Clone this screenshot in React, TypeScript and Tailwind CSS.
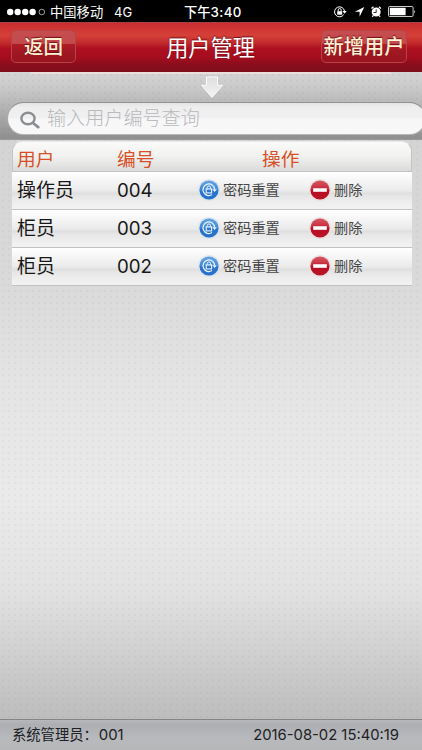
import type { ReactNode } from 'react';

const users = [
  { role: '操作员', id: '004' },
  { role: '柜员', id: '003' },
  { role: '柜员', id: '002' },
];

function StatusBar() {
  return (
    <div className="flex h-[22px] shrink-0 items-center bg-black pt-px pl-[7px] text-[13.3px] leading-[22px] whitespace-nowrap text-white">
      <svg className="h-2 w-[40px] shrink-0" viewBox="0 0 40 8" fill="#fff">
        <circle cx="3.2" cy="4" r="3.2" />
        <circle cx="10.7" cy="4" r="3.2" />
        <circle cx="18.2" cy="4" r="3.2" />
        <circle cx="25.6" cy="4" r="3.2" />
        <circle cx="34.8" cy="4" r="2.8" fill="none" stroke="#ddd" strokeWidth="0.7" />
      </svg>
      <span className="ml-[3px] w-[64px]">中国移动</span>
      <span className="w-[70px] text-[13px]">4G</span>
      <span className="w-[149px] font-medium"><span>下午</span><span className="tracking-[0.35px]">3:40</span></span>
      <svg className="h-[14px] w-[85px] shrink-0" viewBox="0 0 85 14" fill="none" stroke="#fff">
        <path d="M10.7 9.6A5 5 0 1 1 11.5 6.2" strokeWidth="1" />
        <path d="M9.5 6.1h4.2l-2.1 2.6z" fill="#fff" stroke="none" />
        <rect x="4.2" y="6.2" width="5" height="3.5" fill="#fff" stroke="none" />
        <path d="M5.2 6.3V5a1.5 1.5 0 0 1 3 0v1.3" strokeWidth="0.9" />
        <path d="M31.3 2 21.8 6.7h4.8v5z" fill="#fff" stroke="none" />
        <circle cx="43.2" cy="7" r="4.5" fill="#fff" stroke="none" />
        <path d="M38.5 3.6l2-1.8M47.9 3.6l-2-1.8M40.2 10.6l-1 1.1M46.2 10.6l1 1.1" strokeWidth="1.3" />
        <path d="M43.2 4.3v3.2h-2.7" stroke="#000" strokeWidth="0.8" />
        <rect x="55.5" y="1.5" width="24.6" height="10" rx="1.2" strokeWidth="0.8" />
        <rect x="56.8" y="2.8" width="15.8" height="7.4" fill="#fff" stroke="none" />
        <path d="M81.3 4.9q1.8 1.6 0 3.5z" fill="#fff" stroke="none" />
      </svg>
    </div>
  );
}

function NavButton({ wide = false, children }: { wide?: boolean; children: ReactNode }) {
  return (
    <button
      className={`${wide ? 'w-[86px] text-[20.3px]' : 'w-[65px] text-[19.5px]'} flex h-[33px] shrink-0 items-center justify-center rounded-[5px] border border-[#b94249] bg-[linear-gradient(180deg,#c54d50_0%,#c34a4d_40%,#ae1c27_43%,#9f1722_70%,#98141f_100%)] font-medium whitespace-nowrap text-[#fff1d3] [text-shadow:0_-1px_1px_#70101a]`}
    >
      <span className="translate-y-[1px]">{children}</span>
    </button>
  );
}

function ResetIcon() {
  return (
    <svg className="h-[22px] w-[22px] shrink-0" viewBox="0 0 22 22" fill="none">
      <defs>
        <linearGradient id="resetFill" x1="0" y1="0" x2="0" y2="1">
          <stop stopColor="#65a4e2" />
          <stop offset="0.5" stopColor="#4088d8" />
          <stop offset="0.55" stopColor="#2b74cc" />
          <stop offset="1" stopColor="#2470ca" />
        </linearGradient>
      </defs>
      <circle cx="11" cy="11" r="10.8" fill="#d7e3ed" />
      <circle cx="11" cy="11" r="9.6" fill="url(#resetFill)" />
      <path d="M14 15.6A5.8 5.8 0 1 1 16.6 10.3" stroke="#e9f4ff" strokeWidth="1.2" />
      <path d="M14.4 10.2h4.4l-2.2 2.7z" fill="#e9f4ff" />
      <rect x="8.2" y="9.9" width="5.4" height="4" stroke="#e9f4ff" strokeWidth="1.1" />
      <path d="M9.3 9.8V8.5a1.6 1.6 0 0 1 3.2 0V9.8" stroke="#e9f4ff" strokeWidth="1" />
    </svg>
  );
}

function DeleteIcon() {
  return (
    <svg className="h-[22px] w-[22px] shrink-0" viewBox="0 0 22 22">
      <defs>
        <linearGradient id="deleteFill" x1="0" y1="0" x2="0" y2="1">
          <stop stopColor="#d65562" />
          <stop offset="0.48" stopColor="#c62b3c" />
          <stop offset="0.53" stopColor="#b90d22" />
          <stop offset="1" stopColor="#b91528" />
        </linearGradient>
      </defs>
      <circle cx="11" cy="11" r="10.8" fill="#e9dddd" />
      <circle cx="11" cy="11" r="9.6" fill="url(#deleteFill)" />
      <rect x="4" y="9" width="14" height="4" fill="#fff" stroke="#ae1427" strokeWidth="0.4" />
    </svg>
  );
}

export default function App() {
  return (
    <main className="flex h-[750px] w-[422px] flex-col overflow-hidden bg-[radial-gradient(circle,#77777714_0.6px,transparent_1.2px),linear-gradient(180deg,#d4d4d4_0px,#d4d4d4_139px,#dadada_290px,#e4e4e4_380px,#eaeaea_500px,#e2e2e2_590px,#d4d4d4_640px,#bdbdbd_718px)] bg-[size:6px_6px,100%_100%] font-['Inter','Noto_Sans_CJK_SC',sans-serif]">
      <StatusBar />
      <header className="flex h-[50px] shrink-0 items-center justify-between border-t border-[#a93f3e] bg-[linear-gradient(180deg,#c92d30_0%,#d54038_25%,#c32b2d_40%,#ae1020_52%,#a50d1e_70%,#860e1c_88%,#800e1b_100%)] pr-[15px] pb-[2px] pl-[11px]">
        <NavButton>返回</NavButton>
        <h1 className="ml-[24px] translate-y-[1px] text-[22.2px] font-normal whitespace-nowrap text-white [text-shadow:0_-1px_1px_#701019]">用户管理</h1>
        <NavButton wide>新增用户</NavButton>
      </header>

      <section className="flex h-[68px] shrink-0 flex-col border-b border-[#999] bg-[radial-gradient(circle,#66666610_0.7px,transparent_1.1px),linear-gradient(180deg,#d5d5d5_0%,#c8c8c8_25%,#b2b2b2_55%,#929292_95%,#8f8f8f_100%)] bg-[size:6px_6px,100%_100%]">
        <div className="mx-[30px] h-[2px] w-[361px] shrink-0 bg-[#eadfdc]" />
        <div className="flex h-[28px] shrink-0 justify-center pl-[2px]">
          <svg className="mt-[2px] h-[23px] w-[24px]" viewBox="0 0 24 23">
            <defs>
              <linearGradient id="arrowFill" x1="0" y1="0" x2="0" y2="1">
                <stop stopColor="#dedede" />
                <stop offset="1" stopColor="#f4f4f4" />
              </linearGradient>
            </defs>
            <path d="M6.5 1h11v8.3h5L12 21.5 1.5 9.3h5z" fill="url(#arrowFill)" stroke="#fafafa" />
          </svg>
        </div>
        <label className="ml-[7px] flex h-[33px] w-[419px] shrink-0 items-center rounded-full border border-t-[#929292] border-r-[#aaa] border-b-[#b8b8b8] border-l-[#aaa] bg-[linear-gradient(180deg,#e4e4e4_0%,#eee_14%,#f0f0f0_48%,#f7f7f7_52%,#f8f8f8_100%)] pl-[12px]">
          <svg className="mt-[3px] h-[18px] w-[21px] shrink-0" viewBox="0 0 21 18" fill="none" stroke="#8b8e92">
            <ellipse cx="8" cy="7.5" rx="6.6" ry="5.8" strokeWidth="2.4" />
            <path d="m13 12 5.2 4.1" strokeWidth="2.8" strokeLinecap="round" />
          </svg>
          <span className="ml-[6px] pb-px text-[19.1px] font-light text-[#b9b9be]">输入用户编号查询</span>
        </label>
      </section>

      <section className="mt-px ml-[12px] w-[400px]">
        <div className="grid h-[31px] grid-cols-[100px_145px_1fr] items-center rounded-t-[10px] border border-[#c4c4c4] border-t-[#e8e8e8] bg-[linear-gradient(180deg,#fafaf8_0%,#f1f1f0_50%,#dadada_100%)] pt-[7px] pl-[4px] text-[18.7px] leading-none text-[#d65126]">
          <span>用户</span>
          <span>编号</span>
          <span>操作</span>
        </div>
        {users.map(({ role, id }) => (
          <div
            key={id}
            className="grid h-[38px] grid-cols-[100px_81px_111px_1fr] items-center border-b border-[#c2c2c2] bg-[linear-gradient(180deg,#fff_0%,#f5f5f5_25%,#ebebeb_50%,#dedede_59%,#e5e5e5_63%,#efefef_85%,#f2f2f2_100%)] pl-[5px] whitespace-nowrap"
          >
            <span className="pt-[2px] text-[19px] text-[#181818]">{role}</span>
            <span className="pt-px text-[18.7px] text-[#181818]">{id}</span>
            <button className="flex items-center pb-px text-[14.2px] text-[#474747]">
              <ResetIcon /><span className="ml-[3px]">密码重置</span>
            </button>
            <button className="flex items-center pb-px text-[14.2px] text-[#474747]">
              <DeleteIcon /><span className="ml-[3px]">删除</span>
            </button>
          </div>
        ))}
      </section>

      <footer className="mt-auto flex h-[31px] shrink-0 items-center justify-between border-t border-[#858585] bg-[linear-gradient(180deg,#b9b9bb_0%,#acaeb1_15%,#b8b9bc_60%,#b5b7b9_100%)] pr-[23px] pl-[12px] text-[14.3px] text-[#202124]">
        <span>系统管理员：<span className="ml-px text-[14.9px]">001</span></span>
        <span className="text-[14.8px]">2016-08-02 15:40:19</span>
      </footer>
    </main>
  );
}
